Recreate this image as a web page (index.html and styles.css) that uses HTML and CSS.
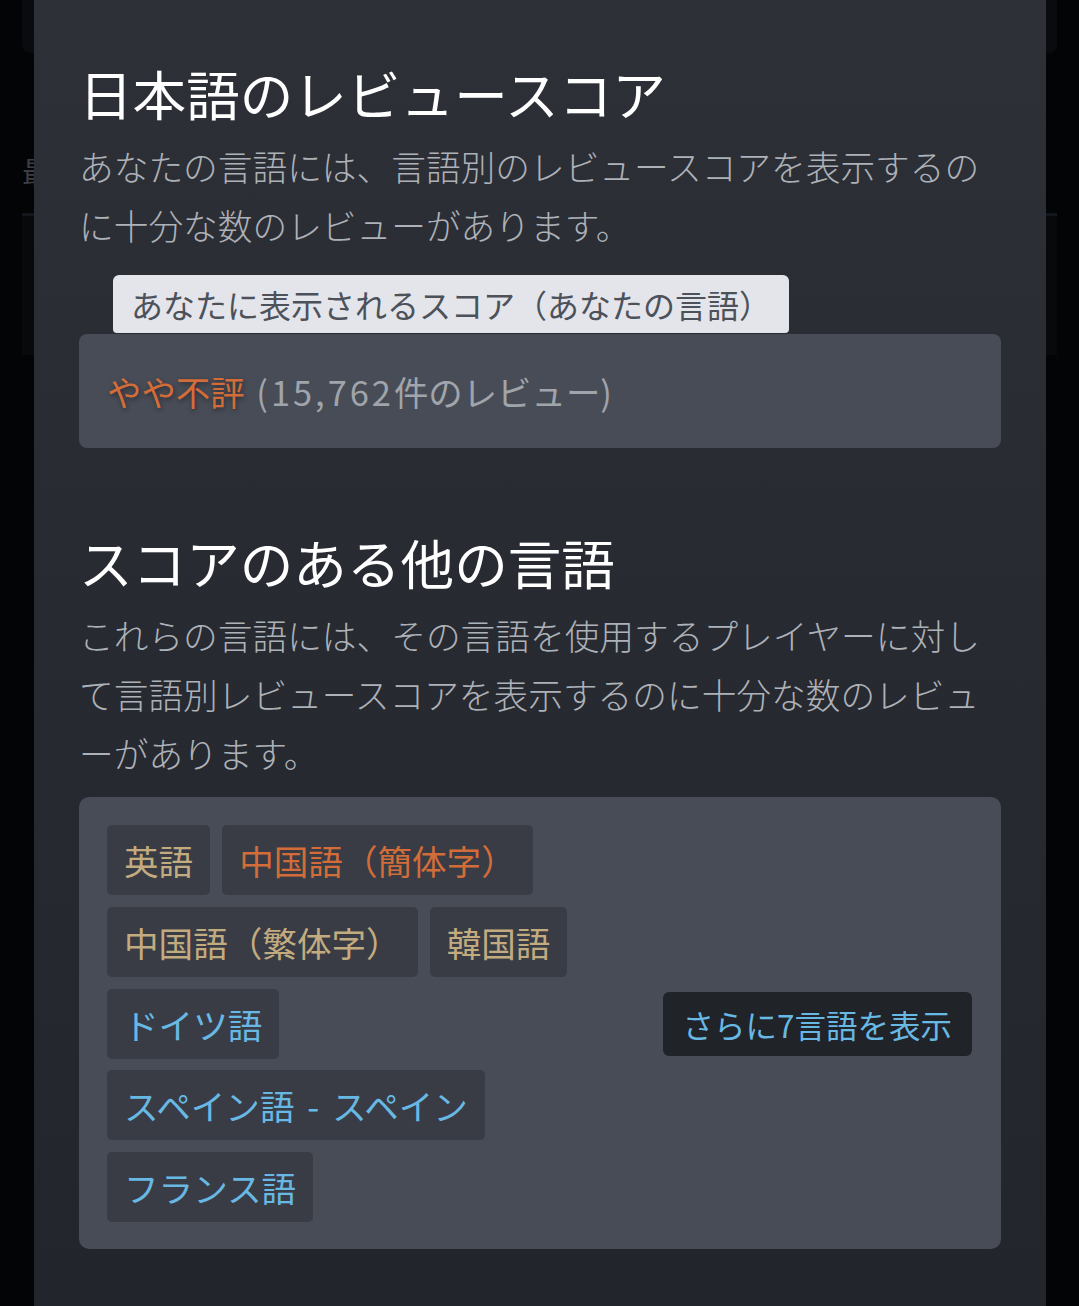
FILE: index.html
```html
<!DOCTYPE html>
<html lang="ja">
<head>
<meta charset="utf-8">
<title>言語別レビュースコア</title>
<link rel="stylesheet" href="styles.css">
</head>
<body>
  <div class="backdrop">
    <div class="bd-top"></div>
    <div class="bd-title">最</div>
    <div class="bd-line"></div>
    <div class="bd-box"></div>
  </div>

  <div class="modal">
    <h1 class="title">日本語のレビュースコア</h1>
    <p class="desc">あなたの言語には、言語別のレビュースコアを表示するのに十分な数のレビューがあります。</p>
    <div class="score-label">あなたに表示されるスコア（あなたの言語）</div>
    <div class="score-box">
      <span class="neg">やや不評</span> <span class="count"><span class="num">(15,762</span>件のレビュー)</span>
    </div>

    <h2 class="title title2">スコアのある他の言語</h2>
    <p class="desc">これらの言語には、その言語を使用するプレイヤーに対して言語別レビュースコアを表示するのに十分な数のレビューがあります。</p>
    <div class="lang-box">
      <div class="tags">
        <span class="tag mixed">英語</span>
        <span class="tag negative">中国語（簡体字）</span>
        <span class="tag mixed">中国語（繁体字）</span>
        <span class="tag mixed">韓国語</span>
        <span class="tag positive">ドイツ語</span>
        <span class="tag positive">スペイン語<span class="sep"> - </span>スペイン</span>
        <span class="tag positive">フランス語</span>
      </div>
      <button class="more">さらに7言語を表示</button>
    </div>
  </div>
</body>
</html>
```

FILE: styles.css
```css
html, body {
  margin: 0;
  padding: 0;
}

body {
  position: relative;
  height: 1306px;
  overflow: hidden;
  background: #030405;
  font-family: "Noto Sans CJK JP", "Noto Sans", sans-serif;
}

/* dimmed page behind the modal */
.backdrop {
  padding: 0 22px;
}

.bd-top {
  height: 53px;
  background: #090b0e;
  border-radius: 0 0 8px 8px;
}

.bd-title {
  margin-top: 97px;
  font-size: 30px;
  line-height: 40px;
  color: #3b3d42;
  white-space: nowrap;
}

.bd-line {
  margin-top: 23px;
  height: 3px;
  background: #13161b;
}

.bd-box {
  height: 139px;
  background: #07090b;
}

/* modal panel */
.modal {
  position: absolute;
  top: 0;
  bottom: 0;
  left: 34px;
  width: 1012px;
  box-sizing: border-box;
  padding: 61px 45px 0;
  background: linear-gradient(to bottom, #2d3037 0%, #272a31 50%, #22252c 100%);
}

.title {
  margin: 0;
  font-size: 53.6px;
  line-height: 64px;
  font-weight: 400;
  color: #ffffff;
  white-space: nowrap;
}

.title2 {
  margin-top: 82px;
}

.desc {
  margin: 12px 0 0;
  font-size: 34.7px;
  line-height: 59px;
  font-weight: 300;
  color: #adb1b8;
  line-break: loose;
}

.score-label {
  width: fit-content;
  margin: 20px 0 0 34px;
  padding: 0 18px;
  height: 58px;
  line-height: 58px;
  font-size: 32px;
  color: #4d515a;
  background: #e3e5ea;
  border-radius: 6px 6px 4px 4px;
  white-space: nowrap;
}

.score-box {
  margin-top: 1px;
  padding: 32px 28px;
  font-size: 34.4px;
  line-height: 50px;
  background: #484c56;
  border-radius: 8px;
  white-space: nowrap;
}

.neg {
  color: #d26c38;
  text-shadow: 1px 2px 5px rgba(0, 0, 0, 0.45);
}

.count {
  margin-left: 4px;
  color: #a0a4ab;
}

.num {
  letter-spacing: 3px;
}

.lang-box {
  display: flex;
  align-items: center;
  justify-content: space-between;
  margin-top: 14px;
  padding: 28px 29px 27px 28px;
  background: #484c56;
  border-radius: 10px;
}

.tags {
  display: flex;
  flex-wrap: wrap;
  gap: 11.75px 12px;
  width: 530px;
}

.tag {
  padding: 10px 17px;
  font-size: 34.6px;
  line-height: 50px;
  background: #393c45;
  border-radius: 5px;
  white-space: nowrap;
}

.sep {
  margin: 0 5px;
}

.mixed {
  color: #c3ab80;
}

.negative {
  color: #d26c38;
}

.positive {
  color: #68b8e4;
}

.more {
  height: 64px;
  padding: 0 20px;
  font-family: inherit;
  font-size: 31.5px;
  line-height: 64px;
  color: #68b8e4;
  background: #202328;
  border: none;
  border-radius: 6px;
  white-space: nowrap;
}
```
